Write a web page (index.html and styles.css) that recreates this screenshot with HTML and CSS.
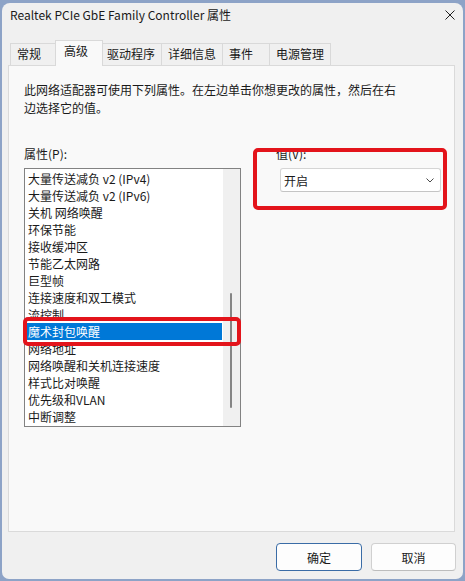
FILE: index.html
```html
<!DOCTYPE html>
<html lang="zh-CN">
<head>
  <meta charset="UTF-8" />
  <meta name="viewport" content="width=device-width, initial-scale=1.0"/>
  <title>Realtek PCIe GbE Family Controller 属性</title>
  <link rel="stylesheet" href="styles.css">
</head>
<body>
  <div class="window">
    <div class="titlebar">
      <span class="title">Realtek PCIe GbE Family Controller 属性</span>
      <svg class="close" width="10" height="10" viewBox="0 0 10 10">
        <path d="M0.5 0.5 L9.5 9.5 M9.5 0.5 L0.5 9.5" stroke="#1f1f1f" stroke-width="1" fill="none"/>
      </svg>
    </div>

    <div class="tabs">
      <div class="tab">常规</div>
      <div class="tab active">高级</div>
      <div class="tab">驱动程序</div>
      <div class="tab">详细信息</div>
      <div class="tab">事件</div>
      <div class="tab">电源管理</div>
    </div>

    <div class="panel">
      <p class="intro">此网络适配器可使用下列属性。在左边单击你想更改的属性，然后在右<br>边选择它的值。</p>

      <div class="columns">
        <div class="props">
          <div class="label">属性(P):</div>
          <div class="listbox">
            <ul class="items">
              <li>大量传送减负 v2 (IPv4)</li>
              <li>大量传送减负 v2 (IPv6)</li>
              <li>关机 网络唤醒</li>
              <li>环保节能</li>
              <li>接收缓冲区</li>
              <li>节能乙太网路</li>
              <li>巨型帧</li>
              <li>连接速度和双工模式</li>
              <li>流控制</li>
              <li class="selected">魔术封包唤醒</li>
              <li>网络地址</li>
              <li>网络唤醒和关机连接速度</li>
              <li>样式比对唤醒</li>
              <li>优先级和VLAN</li>
              <li>中断调整</li>
            </ul>
            <div class="scrollbar"><div class="thumb"></div></div>
            <div class="mark mark-item"></div>
          </div>
        </div>

        <div class="value">
          <div class="label">值(V):</div>
          <div class="select">
            <span>开启</span>
            <svg width="8" height="5" viewBox="0 0 8 5">
              <path d="M0.5 0.5 L4 4 L7.5 0.5" stroke="#4a4a4a" stroke-width="1" fill="none"/>
            </svg>
          </div>
          <div class="mark mark-value"></div>
        </div>
      </div>
    </div>

    <div class="buttons">
      <button class="btn default">确定</button>
      <button class="btn cancel">取消</button>
    </div>
  </div>
</body>
</html>
```

FILE: styles.css
```css
* { box-sizing: border-box; }

body {
  margin: 0;
  background-color: #8da3c7;
  font-family: "Noto Sans CJK SC", "Liberation Sans", sans-serif;
  font-size: 12px;
  color: #1a1a1a;
}

.window {
  margin: 3px 2px 0;
  height: 576px;
  background-color: #f0f0f0;
  border-radius: 8px 8px 7px 7px;
  display: flex;
  flex-direction: column;
}

.titlebar {
  height: 24px;
  display: flex;
  align-items: center;
  justify-content: space-between;
  padding: 0 8px;
}
.title { line-height: 24px; }

/* tabs */
.tabs {
  display: flex;
  align-items: flex-end;
  height: 38px;
  margin-left: 8px;
}
.tab {
  height: 22px;
  min-width: 48px;
  padding: 0 6px;
  line-height: 20px;
  border: 1px solid #d9d9d9;
  border-bottom: none;
  margin-left: -1px;
  background-color: #f0f0f0;
  white-space: nowrap;
}
.tab:first-child { margin-left: 0; }
.tab.active {
  height: 26px;
  margin: 0 -2px -1px -3px;
  padding: 0 8px;
  background-color: #f9f9f9;
  position: relative;
  z-index: 1;
}

/* panel */
.panel {
  margin-left: 6px;
  width: 447px;
  height: 467px;
  border: 1px solid #dadada;
  background-color: #f9f9f9;
  padding: 15px 10px 0 15px;
}
.intro {
  margin: 0;
  line-height: 18px;
}
.columns {
  display: flex;
  margin-top: 28px;
}
.label {
  height: 18px;
  line-height: 18px;
  margin-bottom: 5px;
}

.props {
  width: 217px;
  flex-shrink: 0;
}
.listbox {
  display: flex;
  height: 259px;
  border: 1px solid #828282;
  background-color: #fff;
  position: relative;
}
.items {
  list-style: none;
  margin: 0;
  padding: 1px 1px 0;
  flex: 1;
}
.items li {
  height: 17px;
  line-height: 17px;
  padding-left: 2px;
  white-space: nowrap;
}
.items li.selected {
  background-color: #0078d7;
  color: #fff;
}
.scrollbar {
  width: 17px;
  background-color: #f0f0f0;
  padding: 124px 0 0 7px;
}
.thumb {
  width: 2px;
  height: 115px;
  background-color: #858585;
  border-radius: 1px;
}

.value {
  margin-left: 35px;
  width: 168px;
  flex-shrink: 0;
  position: relative;
}
.select {
  margin-left: 4px;
  width: 161px;
  height: 24px;
  border: 1px solid #d5d5d5;
  border-bottom-color: #c4c4c4;
  border-radius: 3px;
  background-color: #fff;
  display: flex;
  align-items: center;
  justify-content: space-between;
  padding: 0 6px 0 3px;
}

/* red annotation boxes */
.mark {
  position: absolute;
  border: 4px solid #e3141b;
  border-radius: 5px;
}
.mark-item { left: -2px; top: 148px; width: 218px; height: 29px; }
.mark-value { left: -23px; top: 3px; width: 194px; height: 62px; }

/* buttons */
.buttons {
  display: flex;
  justify-content: flex-end;
  gap: 9px;
  margin-top: 11px;
  padding-right: 7px;
}
.btn {
  width: 86px;
  height: 28px;
  border: 1px solid #d0d0d0;
  border-bottom-color: #bdbdbd;
  border-radius: 4px;
  background-color: #fdfdfd;
  font: inherit;
  color: #1a1a1a;
}
.btn.default { border-color: #3a6ca6; }
.btn.cancel { width: 85px; }
```
